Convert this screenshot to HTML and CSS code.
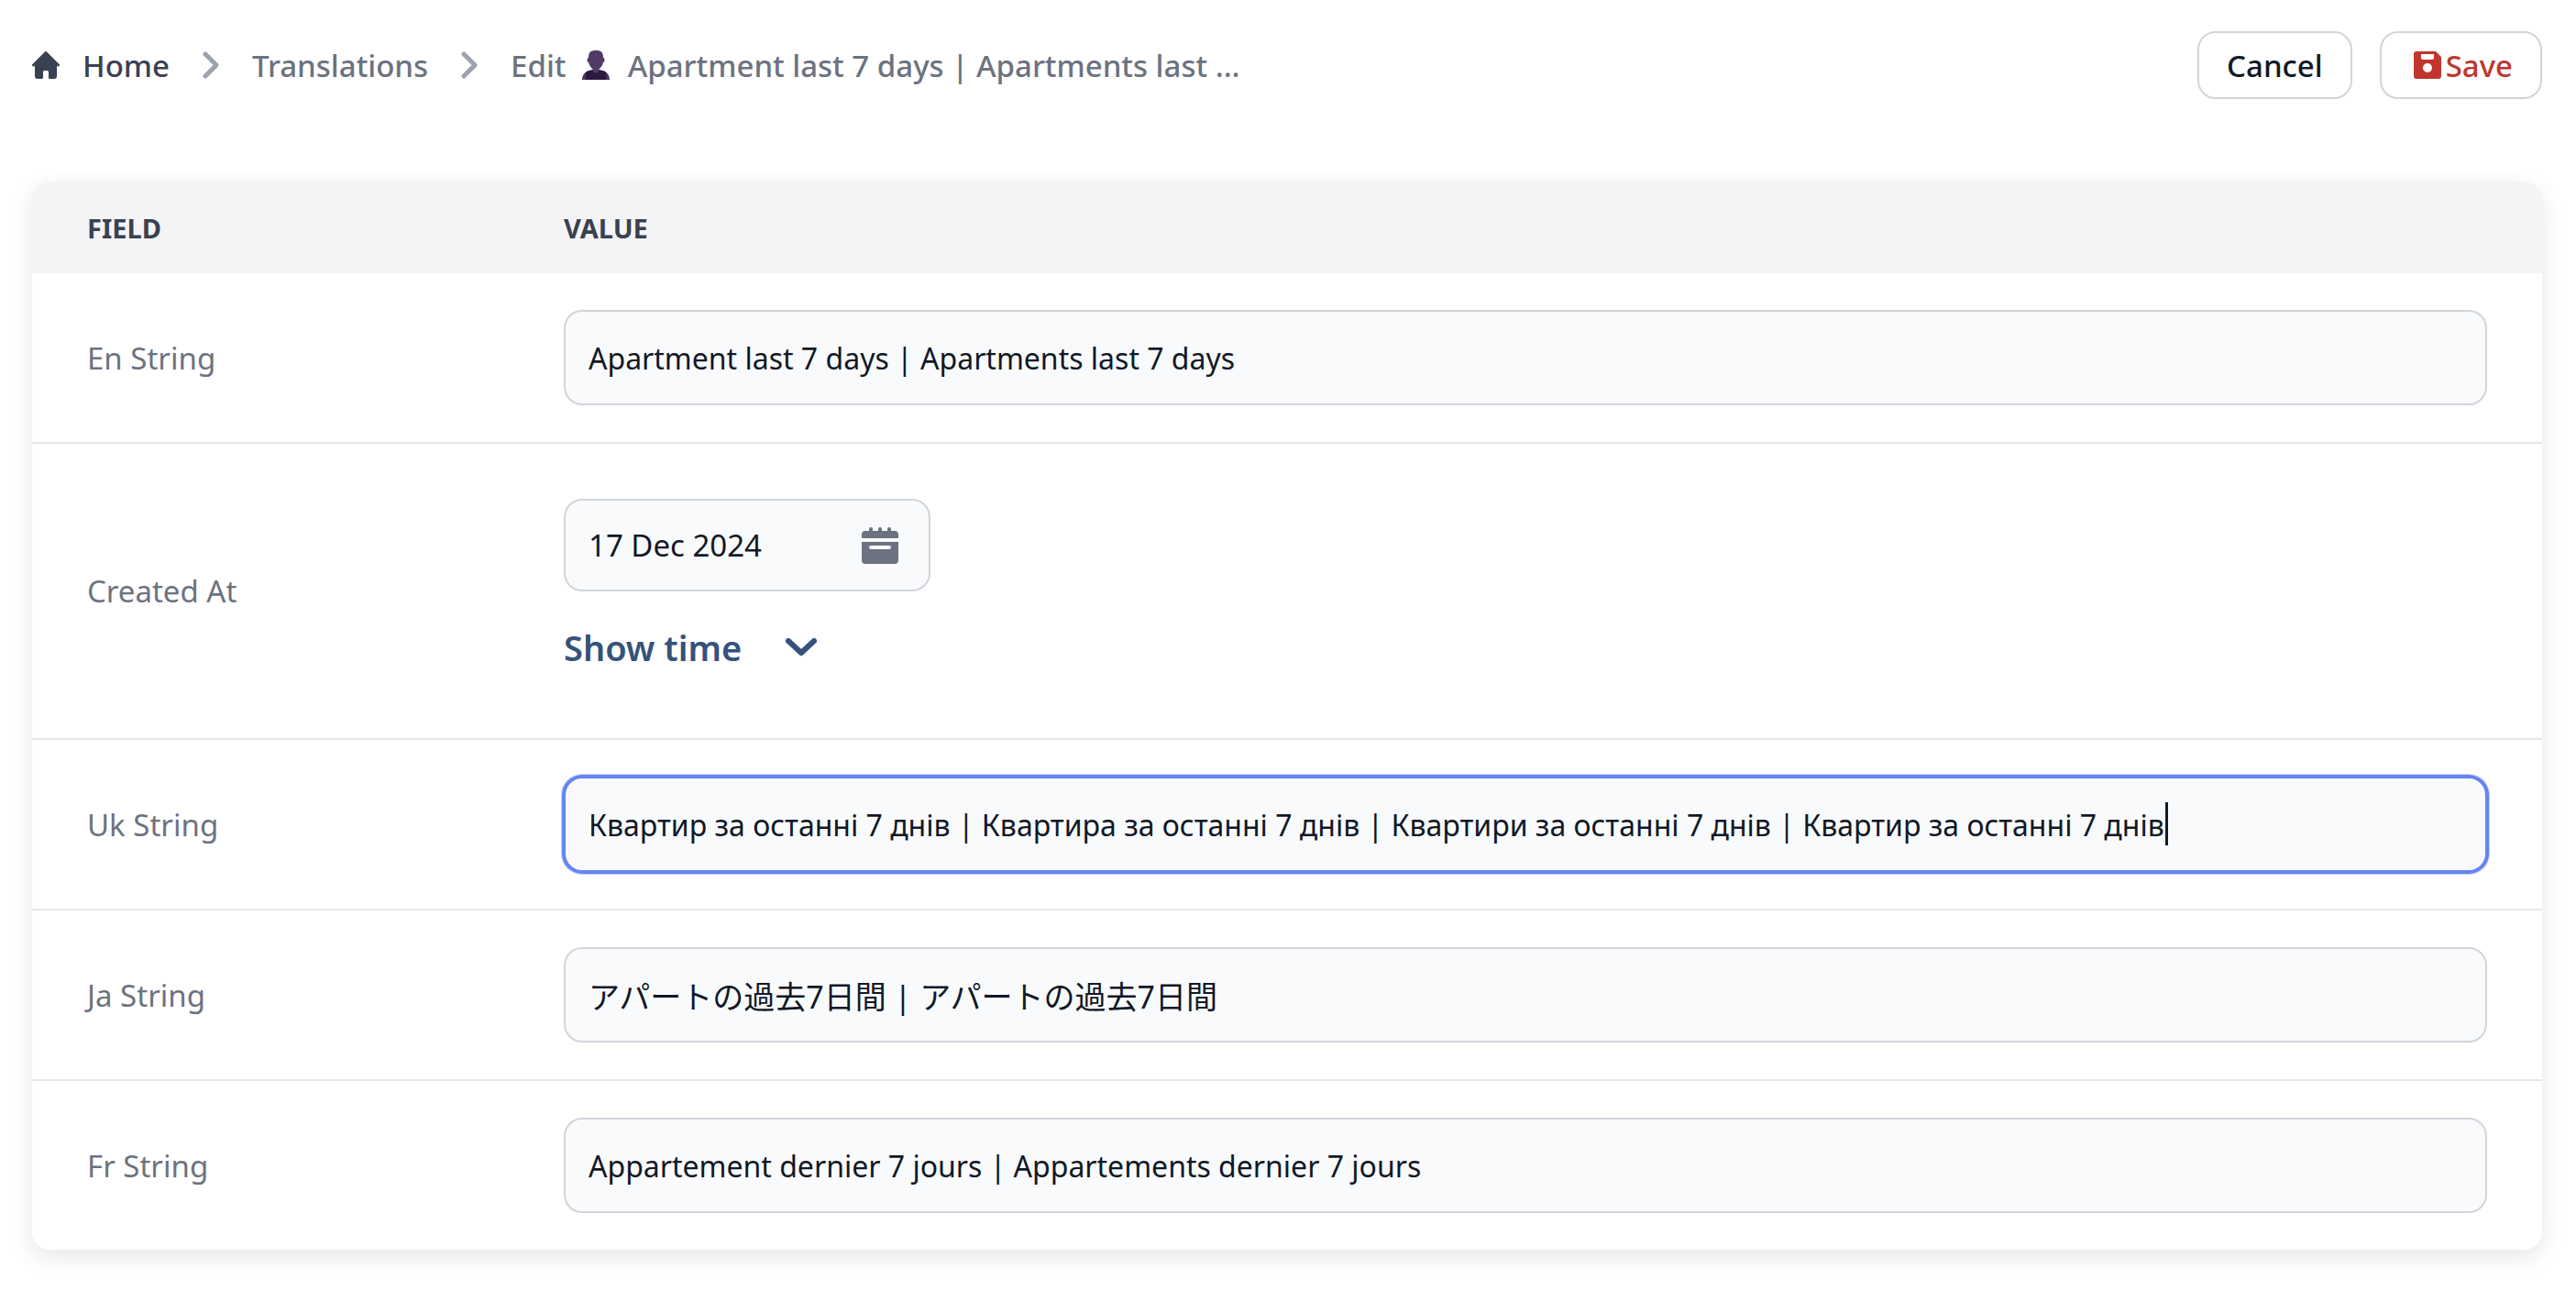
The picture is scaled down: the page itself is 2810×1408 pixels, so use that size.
FILE: index.html
```html
<!DOCTYPE html>
<html lang="en">
<head>
<meta charset="utf-8">
<meta name="viewport" content="width=device-width, initial-scale=1">
<title>Edit translation</title>
<link rel="stylesheet" href="styles.css">
</head>
<body>
<form class="page">
  <header class="topbar">
    <nav aria-label="Breadcrumb">
      <ol class="crumbs">
        <li class="crumb">
          <a class="crumb-link crumb-home" href="#">
            <svg class="icon-home" viewBox="0 0 20 20" fill="currentColor" aria-hidden="true"><path d="m19.707 9.293-2-2-7-7a1 1 0 0 0-1.414 0l-7 7-2 2a1 1 0 0 0 1.414 1.414L2 10.414V18a2 2 0 0 0 2 2h3a1 1 0 0 0 1-1v-4a1 1 0 0 1 1-1h2a1 1 0 0 1 1 1v4a1 1 0 0 0 1 1h3a2 2 0 0 0 2-2v-7.586l.293.293a1 1 0 0 0 1.414-1.414Z"/></svg>
            Home
          </a>
        </li>
        <li class="crumb">
          <svg class="icon-sep" viewBox="0 0 18 30" aria-hidden="true"><path d="m3 3 12 12L3 27"/></svg>
          <a class="crumb-link" href="#">Translations</a>
        </li>
        <li class="crumb" aria-current="page">
          <svg class="icon-sep" viewBox="0 0 18 30" aria-hidden="true"><path d="m3 3 12 12L3 27"/></svg>
          <span class="crumb-title">Edit
            <svg class="icon-person" viewBox="0 0 32 34" aria-hidden="true"><path fill="#4b3560" d="M1 33c0-5 3-9 8-10l7-2 7 2c5 1 8 5 8 10Z"/><path fill="#2b1a3d" d="M5 33V25c2-2 4-2 7-2.500L16 26l4-3.500c3 .5 5 .5 7 2.500v8Z"/><path fill="#503a66" d="M8 9c0-6 2-8 8-8s8 2 8 8c2 0 2 5 0 5-1 4-3 6-5 8v2l-3 2-3-2v-2c-2-2-4-4-5-8-2 0-2-5 0-5Z"/></svg>
            Apartment last 7 days | Apartments last ...</span>
        </li>
      </ol>
    </nav>
    <div class="actions">
      <button type="button" class="btn">Cancel</button>
      <button type="submit" class="btn btn-save">
        <svg class="icon-save" viewBox="0 0 30 30" aria-hidden="true"><path fill="currentColor" fill-rule="evenodd" d="M3 0h21l6 6v21a3 3 0 0 1-3 3H3a3 3 0 0 1-3-3V3a3 3 0 0 1 3-3Zm5 3v4a2 2 0 0 0 2 2h10a2 2 0 0 0 2-2V3Zm7 10a5 5 0 1 0 0 10 5 5 0 0 0 0-10Z"/></svg>
        Save
      </button>
    </div>
  </header>

  <table class="card">
    <thead>
      <tr><th class="col-field" scope="col">FIELD</th><th scope="col">VALUE</th></tr>
    </thead>
    <tbody>
      <tr>
        <th scope="row"><label for="en">En String</label></th>
        <td><input class="field" id="en" type="text" value="Apartment last 7 days | Apartments last 7 days"></td>
      </tr>
      <tr>
        <th scope="row"><label for="created">Created At</label></th>
        <td class="cell-date">
          <div class="date-box">
            <input class="date-input" id="created" type="text" value="17 Dec 2024">
            <svg class="icon-calendar" viewBox="0 0 40 40" aria-hidden="true"><path fill="currentColor" fill-rule="evenodd" d="M0 12V8a4 4 0 0 1 4-4h4V2a2 2 0 0 1 4 0v2h6V2a2 2 0 0 1 4 0v2h6V2a2 2 0 0 1 4 0v2h4a4 4 0 0 1 4 4v4ZM0 16h40v20a4 4 0 0 1-4 4H4a4 4 0 0 1-4-4Zm10 4a2 2 0 0 0 0 4h20a2 2 0 0 0 0-4Z"/></svg>
          </div>
          <button type="button" class="show-time">
            Show time
            <svg class="icon-down" viewBox="0 0 34 20" aria-hidden="true"><path d="m3 3 14 13L31 3"/></svg>
          </button>
        </td>
      </tr>
      <tr>
        <th scope="row"><label for="uk">Uk String</label></th>
        <td>
          <div class="field-wrap">
            <input class="field is-focused" id="uk" type="text" lang="uk" value="Квартир за останні 7 днів | Квартира за останні 7 днів | Квартири за останні 7 днів | Квартир за останні 7 днів">
            <span class="caret"></span>
          </div>
        </td>
      </tr>
      <tr>
        <th scope="row"><label for="ja">Ja String</label></th>
        <td><input class="field field-ja" id="ja" type="text" lang="ja" value="アパートの過去7日間 | アパートの過去7日間"></td>
      </tr>
      <tr>
        <th scope="row"><label for="fr">Fr String</label></th>
        <td><input class="field" id="fr" type="text" lang="fr" value="Appartement dernier 7 jours | Appartements dernier 7 jours"></td>
      </tr>
    </tbody>
  </table>
</form>
</body>
</html>
```
FILE: styles.css
```css
* { box-sizing: border-box; }

body {
  margin: 0;
  background: #fff;
  color: #111827;
  font-family: "Noto Sans", "Noto Sans CJK JP", sans-serif;
  font-size: 33px;
}

svg { flex: none; }
input, button { font-family: inherit; color: inherit; }

.page { padding: 34px 37px 40px 35px; }

.topbar {
  display: flex;
  align-items: center;
  justify-content: space-between;
  margin-bottom: 90px;
}

.crumbs {
  display: flex;
  gap: 36px;
  margin: 0;
  padding: 0;
  list-style: none;
  font-size: 33px;
  font-weight: 500;
  color: #6c7280;
}
.crumb { display: flex; align-items: center; gap: 36px; }
.crumb-link { color: inherit; text-decoration: none; }
.crumb-home { display: flex; align-items: center; gap: 25px; color: #3a4150; }
.crumb-title { white-space: nowrap; }
.icon-home { width: 30px; height: 30px; }
.icon-sep {
  width: 18px;
  height: 30px;
  fill: none;
  stroke: #9ca3af;
  stroke-width: 5;
  stroke-linecap: round;
  stroke-linejoin: round;
}
.icon-person {
  width: 32px;
  height: 34px;
  margin: 0 10px 0 8px;
  vertical-align: -4px;
}

.actions { display: flex; gap: 30px; }
.btn {
  display: flex;
  align-items: center;
  gap: 5px;
  height: 74px;
  padding: 0 30px;
  border: 2px solid #d1d5db;
  border-radius: 20px;
  background: #fff;
  font-size: 33px;
  font-weight: 500;
}
.btn-save { padding-left: 35px; color: #c0362c; }
.icon-save { width: 30px; height: 30px; }

.card {
  width: 100%;
  border-collapse: separate;
  border-spacing: 0;
  border-radius: 20px;
  overflow: hidden;
  box-shadow: 0 8px 26px rgba(0, 0, 0, 0.1);
}
.card th { text-align: left; padding: 0 60px; }
.card thead th {
  height: 100px;
  background: #f4f4f7;
  color: #3a4150;
  font-size: 29px;
  font-weight: 700;
}
.col-field { width: 520px; }
.card tbody th { font-weight: 400; color: #6c7280; }
.card td { padding: 40px 60px; }
.card tbody tr:not(:last-child) > * { border-bottom: 2px solid #e5e6eb; }
.card .cell-date { padding: 60px 60px 68px; }

.field {
  display: block;
  width: 100%;
  height: 104px;
  padding: 0 25px;
  border: 2px solid #d1d5db;
  border-radius: 20px;
  background: #f9fafb;
  font-size: 32px;
  outline: none;
}
.field-ja { font-size: 34px; }
.field-wrap { position: relative; }
.is-focused {
  border-color: #6485f2;
  box-shadow: 0 0 0 2px #6485f2, 0 0 0 3px #c5d1fa;
}
/* text cursor at the end of the focused value */
.caret {
  position: absolute;
  top: 28px;
  left: 1747px;
  width: 3px;
  height: 47px;
  background: #111827;
}

.date-box {
  display: flex;
  align-items: center;
  width: 400px;
  height: 101px;
  padding: 0 33px 0 25px;
  border: 2px solid #d1d5db;
  border-radius: 20px;
  background: #f9fafb;
}
.date-input {
  flex: 1;
  min-width: 0;
  padding: 0;
  border: 0;
  background: none;
  font-size: 33px;
  outline: none;
}
.icon-calendar { width: 40px; height: 40px; color: #6c7280; }

.show-time {
  display: flex;
  align-items: center;
  gap: 48px;
  margin-top: 30px;
  padding: 0;
  border: 0;
  background: none;
  color: #35527c;
  font-size: 38px;
  font-weight: 600;
  line-height: 62px;
}
.icon-down {
  width: 34px;
  height: 20px;
  fill: none;
  stroke: currentColor;
  stroke-width: 6;
  stroke-linecap: round;
  stroke-linejoin: round;
}
```
